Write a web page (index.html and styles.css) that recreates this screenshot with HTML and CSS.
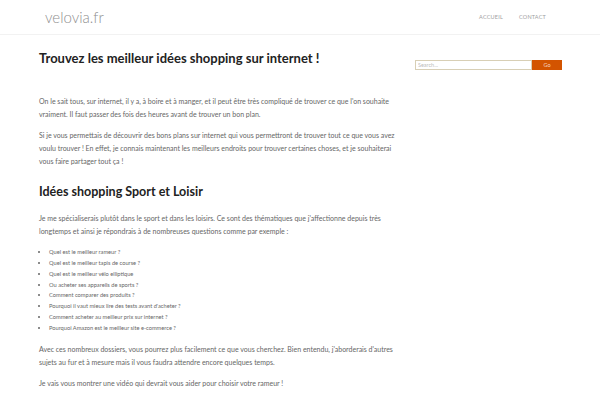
FILE: index.html
```html
<!DOCTYPE html>
<html lang="fr">
<head>
<meta charset="utf-8">
<title>velovia.fr</title>
<link rel="stylesheet" href="styles.css">
</head>
<body>
<header class="topbar">
  <div class="brand">velovia.fr</div>
  <nav class="nav">
    <a href="#">ACCUEIL</a>
    <a href="#">CONTACT</a>
  </nav>
</header>
<div class="wrap">
  <main class="content">
    <h1>Trouvez les meilleur idées shopping sur internet !</h1>
    <p class="first">On le sait tous, sur internet, il y a, à boire et à manger, et il peut être très compliqué de trouver ce que l'on souhaite vraiment. Il faut passer des fois des heures avant de trouver un bon plan.</p>
    <p>Si je vous permettais de découvrir des bons plans sur internet qui vous permettront de trouver tout ce que vous avez voulu trouver ! En effet, je connais maintenant les meilleurs endroits pour trouver certaines choses, et je souhaiterai vous faire partager tout ça !</p>
    <h2>Idées shopping Sport et Loisir</h2>
    <p>Je me spécialiserais plutôt dans le sport et dans les loisirs. Ce sont des thématiques que j'affectionne depuis très longtemps et ainsi je répondrais à de nombreuses questions comme par exemple :</p>
    <ul>
      <li>Quel est le meilleur rameur ?</li>
      <li>Quel est le meilleur tapis de course ?</li>
      <li>Quel est le meilleur vélo elliptique</li>
      <li>Ou acheter ses appareils de sports ?</li>
      <li>Comment comparer des produits ?</li>
      <li>Pourquoi il vaut mieux lire des tests avant d'acheter ?</li>
      <li>Comment acheter au meilleur prix sur internet ?</li>
      <li>Pourquoi Amazon est le meilleur site e-commerce ?</li>
    </ul>
    <p>Avec ces nombreux dossiers, vous pourrez plus facilement ce que vous cherchez. Bien entendu, j'aborderais d'autres sujets au fur et à mesure mais il vous faudra attendre encore quelques temps.</p>
    <p>Je vais vous montrer une vidéo qui devrait vous aider pour choisir votre rameur !</p>
  </main>
  <aside class="sidebar">
    <form class="search">
      <input type="text" placeholder="Search...">
      <button type="button">Go</button>
    </form>
  </aside>
</div>
</body>
</html>
```
FILE: styles.css
```css
html, body {
  margin: 0;
  padding: 0;
  background: #fff;
  font-family: Lato, "Open Sans", sans-serif;
  overflow: hidden;
}
.topbar {
  height: 34px;
  border-bottom: 1px solid #f2f2f2;
  display: flex;
  align-items: center;
  justify-content: space-between;
  padding: 0 54px 0 45px;
}
.brand {
  font-size: 15px;
  font-weight: 300;
  color: #909090;
}
.nav {
  display: flex;
  gap: 16px;
}
.nav a {
  font-size: 5.5px;
  color: #a0a0a0;
  text-decoration: none;
  letter-spacing: 0.2px;
}
.wrap {
  display: flex;
  padding: 0 0 0 39px;
}
.content {
  width: 362px;
  flex: none;
}
h1 {
  font-size: 13px;
  font-weight: 700;
  color: #222;
  margin: 14px 0 0;
  line-height: 18px;
}
h2 {
  font-size: 12.5px;
  font-weight: 700;
  color: #222;
  margin: 15px 0 0;
  line-height: 18px;
}
p {
  font-size: 7px;
  line-height: 13px;
  color: #666;
  margin: 8px 0 0;
}
p.first {
  margin-top: 28px;
}
h2 + p {
  margin-top: 11px;
}
ul {
  margin: 9px 0 0;
  padding: 0 0 0 10px;
  font-size: 5.7px;
  line-height: 10.85px;
  color: #666;
}
ul + p {
  margin-top: 9px;
}
.sidebar {
  margin-left: 14px;
  padding-top: 25px;
}
.search {
  display: flex;
  margin: 0;
}
.search input {
  width: 117px;
  height: 10px;
  box-sizing: border-box;
  border: 1px solid #d8cfb5;
  padding: 0 2px;
  font-family: Lato, sans-serif;
  font-size: 5.5px;
  color: #999;
  margin: 0;
  outline: none;
}
.search input::placeholder {
  color: #bbb;
}
.search button {
  width: 30px;
  height: 10px;
  border: 0;
  background: #d35400;
  color: #f6d6c0;
  font-family: Lato, sans-serif;
  font-size: 5.5px;
  padding: 0;
  margin: 0;
}
```
